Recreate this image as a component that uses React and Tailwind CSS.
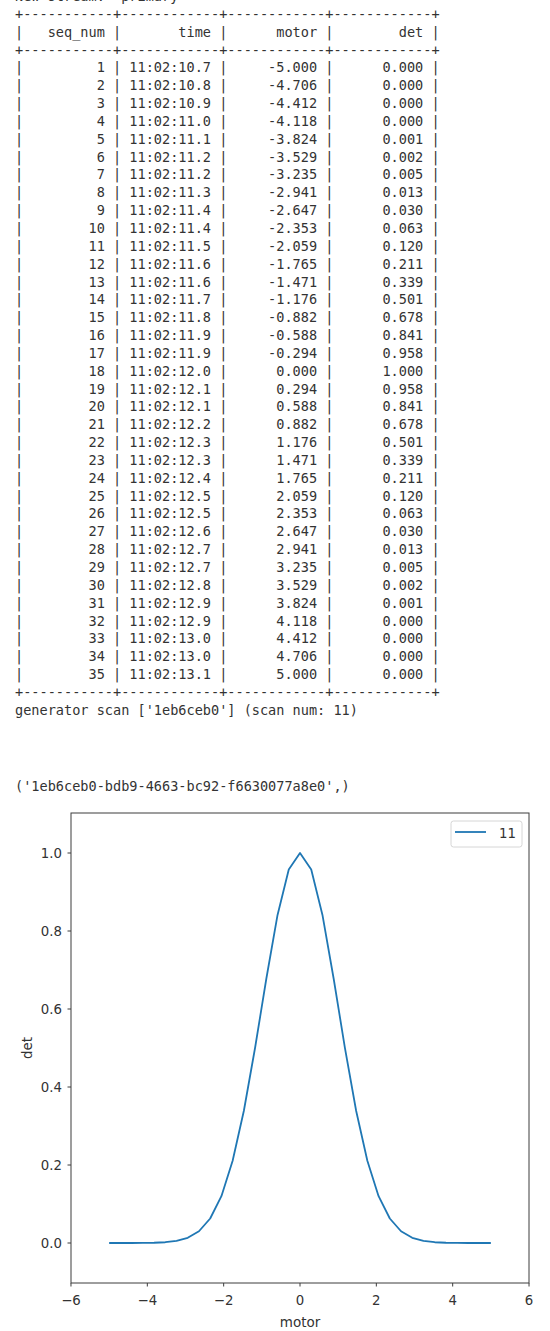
import React from 'react'

const times = [
  '10.7', '10.8', '10.9', '11.0', '11.1', '11.2', '11.2', '11.3', '11.4', '11.4',
  '11.5', '11.6', '11.6', '11.7', '11.8', '11.9', '11.9', '12.0', '12.1', '12.1',
  '12.2', '12.3', '12.3', '12.4', '12.5', '12.5', '12.6', '12.7', '12.7', '12.8',
  '12.9', '12.9', '13.0', '13.0', '13.1',
]

const motorHalf = [
  '5.000', '4.706', '4.412', '4.118', '3.824', '3.529', '3.235', '2.941', '2.647',
  '2.353', '2.059', '1.765', '1.471', '1.176', '0.882', '0.588', '0.294',
]
const detHalf = [
  '0.000', '0.000', '0.000', '0.000', '0.001', '0.002', '0.005', '0.013', '0.030',
  '0.063', '0.120', '0.211', '0.339', '0.501', '0.678', '0.841', '0.958',
]

const motors = [...motorHalf.map((m) => '-' + m), '0.000', ...[...motorHalf].reverse()]
const dets = [...detHalf, '1.000', ...[...detHalf].reverse()]

const sep = '+' + '-'.repeat(11) + '+' + '-'.repeat(12) + '+' + '-'.repeat(12) + '+' + '-'.repeat(12) + '+'
const row = (a, b, c, d) =>
  '|' + a.padStart(10) + ' | ' + b.padStart(10) + ' | ' + c.padStart(10) + ' | ' + d.padStart(10) + ' |'

const lines = [
  "New stream: 'primary'",
  sep,
  row('seq_num', 'time', 'motor', 'det'),
  sep,
  ...times.map((t, i) => row(String(i + 1), '11:02:' + t, motors[i], dets[i])),
  sep,
  "generator scan ['1eb6ceb0'] (scan num: 11)",
]

// plot mapping (svg coords, top of svg = page y 800)
const xm = (v) => 300 + v * 38.17
const ym = (v) => 443 - v * 390

const points = Array.from({ length: 35 }, (_, i) => {
  const x = -5 + (i * 10) / 34
  return `${xm(x).toFixed(2)},${ym(Math.exp(-(x * x) / 2)).toFixed(2)}`
}).join(' ')

const Plot = () => {
  const font = "'DejaVu Sans', 'Liberation Sans', sans-serif"
  return (
    <svg width="550" height="531" viewBox="0 0 550 531" className="block">
      <rect x="71" y="13" width="458" height="470" fill="white" stroke="#3c3c3c" strokeWidth="1" />
      {[0, 0.2, 0.4, 0.6, 0.8, 1.0].map((v) => (
        <g key={v}>
          <line x1="67.5" x2="71" y1={ym(v)} y2={ym(v)} stroke="#3c3c3c" />
          <text x="62" y={ym(v)} textAnchor="end" dominantBaseline="central" fontSize="13.3" fill="#333" fontFamily={font}>
            {v.toFixed(1)}
          </text>
        </g>
      ))}
      {[-6, -4, -2, 0, 2, 4, 6].map((v) => (
        <g key={v}>
          <line x1={xm(v)} x2={xm(v)} y1="483" y2="486.5" stroke="#3c3c3c" />
          <text x={xm(v)} y="500" textAnchor="middle" dominantBaseline="central" fontSize="13.3" fill="#333" fontFamily={font}>
            {v < 0 ? '\u2212' + Math.abs(v) : String(v)}
          </text>
        </g>
      ))}
      <text x="300" y="522" textAnchor="middle" dominantBaseline="central" fontSize="13.5" fill="#333" fontFamily={font}>
        motor
      </text>
      <text
        x="27"
        y="248"
        textAnchor="middle"
        dominantBaseline="central"
        fontSize="13.5"
        fill="#333"
        fontFamily={font}
        transform="rotate(-90 27 248)"
      >
        det
      </text>
      <polyline points={points} fill="none" stroke="#1f77b4" strokeWidth="1.8" strokeLinejoin="round" />
      {/* legend */}
      <rect x="451" y="21" width="71" height="26" rx="2.5" fill="white" fillOpacity="0.8" stroke="#d6d6d6" />
      <line x1="455" x2="486" y1="32" y2="32" stroke="#1f77b4" strokeWidth="1.8" />
      <text x="499" y="33" dominantBaseline="central" fontSize="13.3" fill="#333" fontFamily={font}>
        11
      </text>
    </svg>
  )
}

const App = () => {
  return (
    <div className="w-[550px] h-[1331px] overflow-hidden bg-white">
      <div className="-mt-[12px] pl-[15px] font-['DejaVu_Sans_Mono','Liberation_Mono',monospace] text-[13.57px] leading-[17.85px] text-[#333]">
        <pre className="whitespace-pre font-['DejaVu_Sans_Mono','Liberation_Mono',monospace]">{lines.join('\n')}</pre>
        <pre className="mt-[58px] whitespace-pre font-['DejaVu_Sans_Mono','Liberation_Mono',monospace]">('1eb6ceb0-bdb9-4663-bc92-f6630077a8e0',)</pre>
      </div>
      <div className="mt-[4.3px]">
        <Plot />
      </div>
    </div>
  )
}

export default App
